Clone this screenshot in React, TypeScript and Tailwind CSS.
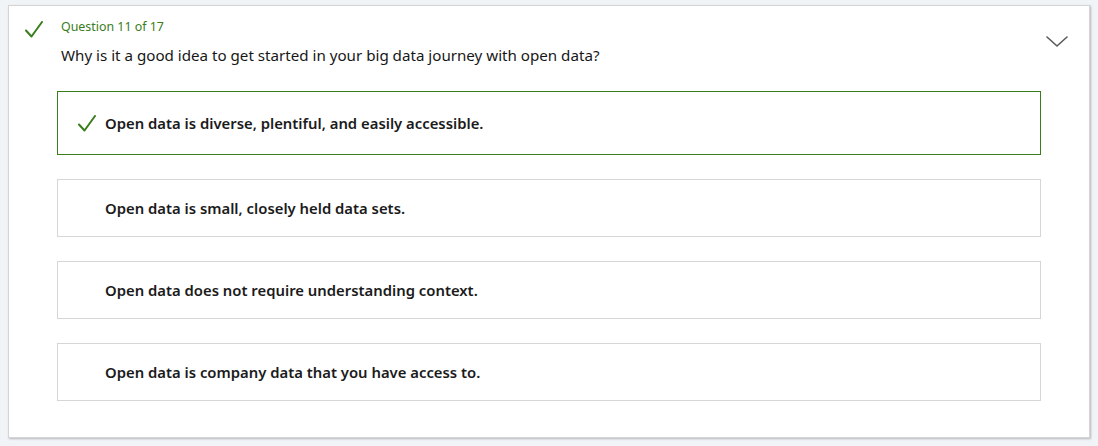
const GREEN = '#3a7d1c'

const OPTIONS = [
  'Open data is diverse, plentiful, and easily accessible.',
  'Open data is small, closely held data sets.',
  'Open data does not require understanding context.',
  'Open data is company data that you have access to.',
]

function Check({ className = '' }: { className?: string }) {
  return (
    <svg width="18" height="17" viewBox="0 0 18 17" className={className} fill="none">
      <path d="M1 9.5 L6.5 15.5 L17 1" stroke={GREEN} strokeWidth="2" strokeLinecap="round" strokeLinejoin="round" />
    </svg>
  )
}

function Chevron() {
  return (
    <svg width="22" height="11" viewBox="0 0 22 11" fill="none">
      <path d="M1 1 L11 10 L21 1" stroke="#5a5a5a" strokeWidth="1.6" strokeLinecap="round" strokeLinejoin="round" />
    </svg>
  )
}

export default function App() {
  return (
    <div className="w-[1098px] h-[446px] bg-[#f1f4f7] pt-[5px] pl-[8px] font-['Noto_Sans',sans-serif]">
      <div className="w-[1082px] h-[433px] bg-white border border-[#d4d4d4] shadow-[1px_1px_2px_rgba(0,0,0,0.25)]">
        <div className="flex pt-[13px] pl-[16px] pr-[21px]">
          <div className="w-[36px] pt-[2px] shrink-0">
            <Check />
          </div>
          <div className="flex-1">
            <div className="text-[12.4px] leading-4 text-[#3a7d1c]">Question 11 of 17</div>
            <div className="mt-[9px] text-[15.15px] leading-[22px] text-[#171717]">
              Why is it a good idea to get started in your big data journey with open data?
            </div>
          </div>
          <button className="self-center mb-[2px]">
            <Chevron />
          </button>
        </div>
        <div className="mt-[25px] px-[48px] flex flex-col gap-[24px]">
          {OPTIONS.map((opt, i) => {
            const correct = i === 0
            return (
              <div
                key={opt}
                className={
                  correct
                    ? 'flex items-center h-[64px] border border-[#3a7d1c] pl-[20px]'
                    : 'flex items-center h-[58px] border border-[#d6d6d6] pl-[47px]'
                }
              >
                {correct && <Check className="mr-[9px]" />}
                <span className="text-[14.85px] font-semibold text-[#1b1b1b]">{opt}</span>
              </div>
            )
          })}
        </div>
      </div>
    </div>
  )
}
